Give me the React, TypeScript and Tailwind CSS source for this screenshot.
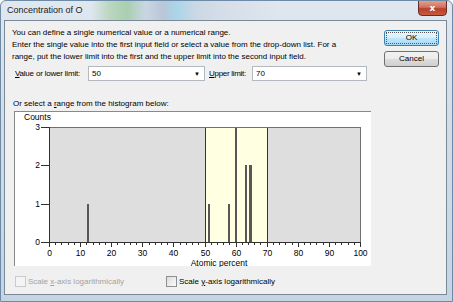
import React from 'react';

const font = { fontFamily: '"Liberation Sans", Arial, sans-serif' };

// histogram scale: x(v) and y(count) in panel-local px
const X0 = 34;
const XS = 3.11;
const Y0 = 130;
const YS = 38.33;
const xv = (v: number) => Math.round(X0 + XS * v);
const yc = (c: number) => Math.round(Y0 - YS * c);

const bars = [
  { v: 12.5, c: 1, w: 2 },
  { v: 51.6, c: 1, w: 2 },
  { v: 57.9, c: 1, w: 2 },
  { v: 60.0, c: 3, w: 2 },
  { v: 63.2, c: 2, w: 2 },
  { v: 64.7, c: 2, w: 3 },
];

function Histogram() {
  const ticks = [];
  for (let v = 0; v <= 100; v += 2) ticks.push(v);
  return (
    <svg width="357" height="155" className="block">
      <text x="9" y="7.5" fontSize="8.5" fill="#000">Counts</text>
      <rect x={X0} y={yc(3)} width={xv(100) - X0} height={Y0 - yc(3)} fill="#dedede" />
      <rect x={xv(50)} y={yc(3)} width={xv(70) - xv(50)} height={Y0 - yc(3)} fill="#ffffe1" />
      {bars.map((b, i) => (
        <rect key={i} x={xv(b.v) - 1} y={yc(b.c)} width={b.w} height={Y0 - yc(b.c)} fill="#575757" />
      ))}
      <line x1={xv(50) + 0.5} y1={yc(3)} x2={xv(50) + 0.5} y2={Y0} stroke="#2222c0" strokeWidth="1" />
      <line x1={xv(70) + 0.5} y1={yc(3)} x2={xv(70) + 0.5} y2={Y0} stroke="#2222c0" strokeWidth="1" />
      {/* frame */}
      <line x1={X0} y1={yc(3) + 0.5} x2={xv(100)} y2={yc(3) + 0.5} stroke="#707070" />
      <line x1={xv(100) + 0.5} y1={yc(3)} x2={xv(100) + 0.5} y2={Y0} stroke="#707070" />
      <line x1={X0 + 0.5} y1={yc(3)} x2={X0 + 0.5} y2={Y0 + 1} stroke="#303030" />
      <line x1={X0} y1={Y0 + 0.5} x2={xv(100) + 1} y2={Y0 + 0.5} stroke="#303030" />
      {[0, 1, 2, 3].map((c) => (
        <g key={c}>
          <line x1={26} y1={yc(c) + 0.5} x2={X0} y2={yc(c) + 0.5} stroke="#303030" />
          <text x="25" y={yc(c) + 3} fontSize="8.5" textAnchor="end" fill="#000">{c}</text>
        </g>
      ))}
      {ticks.map((v) => (
        <line
          key={v}
          x1={xv(v) + 0.5}
          y1={Y0 + 1}
          x2={xv(v) + 0.5}
          y2={Y0 + (v % 10 === 0 ? 5 : 3)}
          stroke="#303030"
        />
      ))}
      {[0, 10, 20, 30, 40, 50, 60, 70, 80, 90, 100].map((v) => (
        <text key={v} x={xv(v) + 0.5} y="144" fontSize="8.5" textAnchor="middle" fill="#000">{v}</text>
      ))}
      <text x={xv(50) + 14} y="154" fontSize="8.5" textAnchor="middle" fill="#000">Atomic percent</text>
    </svg>
  );
}

function Combo({ value, w }: { value: string; w: string }) {
  return (
    <div className={`${w} shrink-0 h-[15px] bg-white border border-[#b4b9bf] flex items-center pl-[3px] pr-[4px]`}>
      <span className="flex-1">{value}</span>
      <span className="text-[6px] leading-none">▼</span>
    </div>
  );
}

export default function App() {
  return (
    <div
      className="w-[453px] h-[302px] overflow-hidden flex flex-col border border-[#6d8aa6] rounded-t-[6px] bg-[linear-gradient(180deg,#dfe7ef_0%,#d3dde8_40%,#c3d4e5_100%)] text-black"
      style={font}
    >
      {/* title bar */}
      <div className="h-[19px] flex items-start bg-[linear-gradient(90deg,transparent_0%,transparent_20%,#bcd6c0_24%,#a8cfb0_28%,#c9d6e2_32%,#b9c6d8_36%,#a9d6ea_39%,#cbd7e4_43%,#d6dfe8_50%,transparent_62%)]">
        <span className="pl-[6px] pt-[4px] text-[9px] leading-[11px] text-[#1a1a1a]">Concentration of O</span>
        <div className="ml-auto mr-[5px] w-[29px] h-[16px] -mt-px rounded-b-[4px] border border-[#6e2a2a] bg-[linear-gradient(180deg,#e4a08c_0%,#d0705c_45%,#b8402a_55%,#c85a40_100%)] flex items-center justify-center">
          <span className="text-white text-[9px] font-bold leading-none" style={{ fontFamily: '"DejaVu Sans", sans-serif' }}>x</span>
        </div>
      </div>

      {/* client area */}
      <div className="ml-[3px] mr-[5px] h-[275px] border border-[#7b8997] bg-[#f0f0f0] flex text-[8px] leading-[12px] whitespace-nowrap">
        <div className="w-[366px] shrink-0 pl-[7px] pt-[6px] flex flex-col">
          <p>
            You can define a single numerical value or a numerical range.
            <br />
            Enter the single value into the first input field or select a value from the drop-down list. For a
            <br />
            range, put the lower limit into the first and the upper limit into the second input field.
          </p>

          <div className="mt-[3px] flex items-center">
            <span className="w-[76px] shrink-0 pl-[3px] tracking-[-0.2px]"><u>V</u>alue or lower limit:</span>
            <Combo value="50" w="w-[117px]" />
            <span className="ml-[4px] w-[43px] shrink-0 tracking-[-0.3px]"><u>U</u>pper limit:</span>
            <Combo value="70" w="w-[115px]" />
          </div>

          <div className="mt-[17px] pl-px">Or select a <u>r</u>ange from the histogram below:</div>

          <div className="mt-px ml-[2px] w-[357px] h-[155px] bg-white border-t border-l border-[#8a8a8a]">
            <Histogram />
          </div>

          <div className="mt-[9px] flex items-center h-[13px]">
            <span className="ml-[3px] w-[11px] h-[11px] shrink-0 border border-[#c9cccf] bg-[#f4f4f4]" />
            <span className="ml-[2px] w-[138px] shrink-0 text-[#a3a3a3]">Scale <u>x</u>-axis logarithmically</span>
            <span className="w-[11px] h-[11px] shrink-0 border border-[#8f8f8f] bg-[linear-gradient(135deg,#dcdcdc,#fafafa)]" />
            <span className="ml-[2px]">Scale <u>y</u>-axis logarithmically</span>
          </div>
        </div>

        <div className="ml-auto pr-[7px] pt-[9px] flex flex-col gap-[5px]">
          <div className="w-[55px] h-[16px] rounded-[3px] border border-[#3c7fb1] bg-[linear-gradient(180deg,#eaf6fd_0%,#d9f0fc_50%,#bee6fd_51%,#a7d9f5_100%)] p-px">
            <div className="w-full h-full border border-dotted border-[#555] flex items-center justify-center">OK</div>
          </div>
          <div className="w-[55px] h-[16px] rounded-[3px] border border-[#707070] bg-[linear-gradient(180deg,#f2f2f2_0%,#ebebeb_50%,#dddddd_51%,#cfcfcf_100%)] flex items-center justify-center">
            Cancel
          </div>
        </div>
      </div>
    </div>
  );
}
